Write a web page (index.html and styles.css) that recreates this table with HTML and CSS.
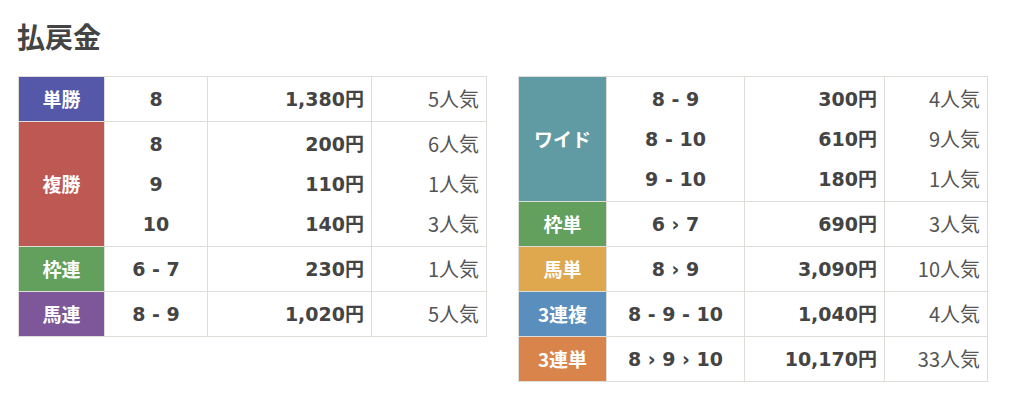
FILE: index.html
```html
<!DOCTYPE html>
<html lang="ja">
<head>
<meta charset="utf-8">
<title>払戻金</title>
<link rel="stylesheet" href="styles.css">
</head>
<body>
<div class="page">
  <h2 class="title">払戻金</h2>
  <div class="tables">
    <table class="pay pay-left">
      <colgroup>
        <col class="cl-label"><col class="cl-num"><col class="cl-yen"><col class="cl-pop">
      </colgroup>
      <tr><th class="bet tansho">単勝</th><td class="num">8</td><td class="yen">1,380円</td><td class="pop">5人気</td></tr>
      <tr><th class="bet fukusho">複勝</th><td class="num">8<br>9<br>10</td><td class="yen">200円<br>110円<br>140円</td><td class="pop">6人気<br>1人気<br>3人気</td></tr>
      <tr><th class="bet wakuren">枠連</th><td class="num">6 - 7</td><td class="yen">230円</td><td class="pop">1人気</td></tr>
      <tr><th class="bet umaren">馬連</th><td class="num">8 - 9</td><td class="yen">1,020円</td><td class="pop">5人気</td></tr>
    </table>
    <table class="pay pay-right">
      <colgroup>
        <col class="cr-label"><col class="cr-num"><col class="cr-yen"><col class="cr-pop">
      </colgroup>
      <tr><th class="bet wide">ワイド</th><td class="num">8 - 9<br>8 - 10<br>9 - 10</td><td class="yen">300円<br>610円<br>180円</td><td class="pop">4人気<br>9人気<br>1人気</td></tr>
      <tr><th class="bet wakutan">枠単</th><td class="num">6 › 7</td><td class="yen">690円</td><td class="pop">3人気</td></tr>
      <tr><th class="bet umatan">馬単</th><td class="num">8 › 9</td><td class="yen">3,090円</td><td class="pop">10人気</td></tr>
      <tr><th class="bet sanfuku">3連複</th><td class="num">8 - 9 - 10</td><td class="yen">1,040円</td><td class="pop">4人気</td></tr>
      <tr><th class="bet santan">3連単</th><td class="num">8 › 9 › 10</td><td class="yen">10,170円</td><td class="pop">33人気</td></tr>
    </table>
  </div>
</div>
</body>
</html>
```
FILE: styles.css
```css
html, body {
  margin: 0;
  padding: 0;
  background: #fff;
}
body {
  font-family: "Noto Sans CJK JP", "Noto Sans", sans-serif;
  color: #444;
}
.page {
  padding: 17px 17px 0 17px;
}
.title {
  margin: 0 0 21px 0;
  font-size: 28px;
  line-height: 38px;
  font-weight: 700;
  color: #444;
}
.tables {
  display: flex;
  align-items: flex-start;
  gap: 31px;
  padding-left: 1px;
}
.pay {
  border-collapse: collapse;
  table-layout: fixed;
  flex: 0 0 auto;
}
.pay-left { width: 468px; }
.pay-right { width: 469px; }
.cl-label { width: 86px; }
.cl-num { width: 103px; }
.cl-yen { width: 164px; }
.cl-pop { width: 115px; }
.cr-label { width: 88px; }
.cr-num { width: 138px; }
.cr-yen { width: 140px; }
.cr-pop { width: 103px; }

.pay th, .pay td {
  border: 1px solid #dfddd8;
  padding: 2px 7px;
  line-height: 40px;
  white-space: nowrap;
}
.bet {
  color: #fff;
  font-size: 19px;
  font-weight: 700;
  text-align: center;
}
.num, .yen {
  font-family: "DejaVu Sans", "Noto Sans CJK JP", sans-serif;
  font-size: 19px;
  font-weight: 700;
  color: #444;
}
.num {
  text-align: center;
}
.yen {
  text-align: right;
}
.pop {
  text-align: right;
  font-size: 20px;
  font-weight: 400;
  color: #555;
}
.tansho { background: #5558a9; }
.fukusho { background: #bd5853; }
.wakuren { background: #63a05d; }
.umaren { background: #7d5799; }
.wide { background: #609aa3; }
.wakutan { background: #63a05d; }
.umatan { background: #dfa84e; }
.sanfuku { background: #5a8ebc; }
.santan { background: #d8844a; }
```
